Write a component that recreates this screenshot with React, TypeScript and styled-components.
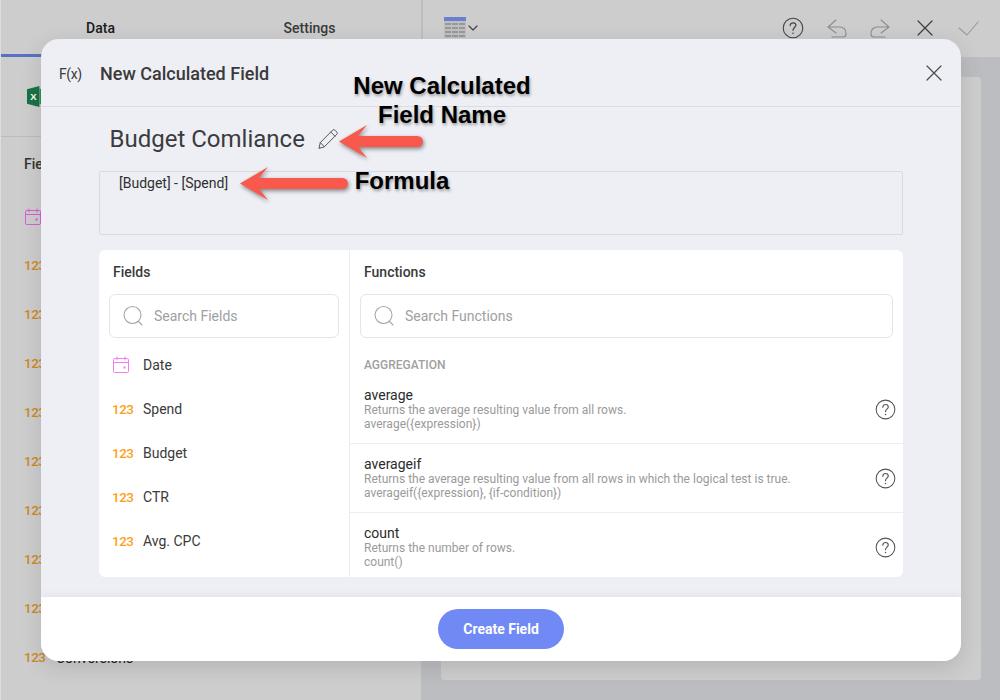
import React from "react";
import styled, { createGlobalStyle } from "styled-components";

const Global = createGlobalStyle`
  html, body { margin: 0; padding: 0; width: 1000px; height: 700px; overflow: hidden; background: #cdcdcd; }
  * { box-sizing: border-box; }
  body { font-family: Roboto, "Liberation Sans", sans-serif; }
`;

const Page = styled.div`
  position: relative;
  width: 1000px;
  height: 700px;
  display: flex;
  overflow: hidden;
  background: #cdcdcd;
`;
const LeftPanel = styled.aside`
  width: 421px;
  flex: none;
  display: flex;
  flex-direction: column;
  border-left: 1px solid #dedede;
  overflow: hidden;
`;
const Tabs = styled.div`
  height: 57px;
  flex: none;
  display: flex;
  margin-left: -5px;
`;
const Tab = styled.div<{ $active?: boolean }>`
  width: 209px;
  flex: none;
  display: flex;
  align-items: flex-start;
  justify-content: center;
  padding-top: 20px;
  font-size: 14px;
  line-height: 17px;
  font-weight: 500;
  color: ${(p) => (p.$active ? "#1a1a1a" : "#3a3a3a")};
  border-bottom: 3px solid ${(p) => (p.$active ? "#5b6fc4" : "transparent")};
`;
const Source = styled.div`
  height: 80px;
  flex: none;
  display: flex;
  align-items: center;
  gap: 8px;
  padding: 0 26px 0;
  border-bottom: 1px solid #bcbcbc;
  font-size: 14px;
  color: #222;
`;
const LeftHeading = styled.div`
  height: 55px;
  flex: none;
  padding: 19px 0 0 23px;
  font-size: 14px;
  line-height: 17px;
  font-weight: 500;
  color: #333;
`;
const LeftRow = styled.div`
  height: 49px;
  flex: none;
  display: flex;
  align-items: center;
  gap: 11px;
  padding-left: 23px;
  font-size: 14px;
  color: #222;
`;
const DimNum = styled.span`
  width: 21px;
  margin-bottom: 2px;
  font-size: 13.5px;
  letter-spacing: -0.5px;
  font-weight: 500;
  color: #cc8a22;
`;
const RightPanel = styled.main`
  flex: 1;
  display: flex;
  flex-direction: column;
  background: #bcbdc1;
`;
const Toolbar = styled.div`
  height: 57px;
  flex: none;
  display: flex;
  align-items: flex-start;
  background: #cdcdcd;
  padding: 17px 21px 0 0;
`;
const ToolDivider = styled.div`
  width: 2px;
  height: 40px;
  margin-top: -17px;
  background: #bebebe;
  margin-right: 21px;
`;
const ToolSpacer = styled.div`
  flex: 1;
`;
const ToolIcon = styled.span<{ $gap: number }>`
  width: 22px;
  height: 22px;
  margin-left: ${(p) => p.$gap}px;
  display: block;
  flex: none;
`;
const Canvas = styled.div`
  flex: 1;
  margin: 20px 19px 20px 20px;
  background: #cdcdcd;
  border-radius: 4px;
`;

const Modal = styled.section`
  position: absolute;
  left: 41px;
  top: 39px;
  width: 920px;
  height: 622px;
  display: flex;
  flex-direction: column;
  background: #eeeff4;
  border-radius: 18px;
  overflow: hidden;
  box-shadow: 0 6px 22px rgba(0, 0, 0, 0.12);
`;
const ModalHeader = styled.header`
  height: 68px;
  flex: none;
  display: flex;
  align-items: center;
  padding: 1px 16px 0 18px;
  border-bottom: 1px solid #dcdde2;
`;
const Fx = styled.span`
  width: 41px;
  padding-top: 2px;
  font-size: 14px;
  letter-spacing: -0.4px;
  color: #3a3a3a;
`;
const ModalTitle = styled.h1`
  flex: 1;
  margin: 0;
  padding-top: 2px;
  font-size: 18px;
  line-height: 22px;
  font-weight: 500;
  color: #3a3a3a;
`;
const ModalBody = styled.div`
  flex: 1;
  min-height: 0;
  display: flex;
  flex-direction: column;
  padding: 0 58px 20px;
`;
const NameRow = styled.div`
  height: 64px;
  flex: none;
  display: flex;
  align-items: center;
  gap: 12px;
  padding: 0 0 0 10.5px;
`;
const NameText = styled.div`
  font-size: 24px;
  line-height: 28px;
  color: #3b3b3f;
`;
const Formula = styled.div`
  height: 64px;
  flex: none;
  padding: 3px 19px;
  border: 1px solid #d9dae0;
  border-radius: 2px;
  font-size: 14px;
  line-height: 17px;
  color: #2f2f2f;
`;
const Panels = styled.div`
  flex: 1;
  min-height: 0;
  margin-top: 15px;
  display: flex;
  background: #fff;
  border-radius: 6px;
  overflow: hidden;
`;
const FieldsCol = styled.div`
  width: 251px;
  flex: none;
  padding: 0 10px;
  border-right: 1px solid #eceded;
  overflow: hidden;
`;
const FunctionsCol = styled.div`
  flex: 1;
  min-width: 0;
  overflow: hidden;
`;
const ColHeading = styled.div<{ $pad: number }>`
  height: 44px;
  padding: 14px 0 0 ${(p) => p.$pad}px;
  font-size: 14px;
  line-height: 17px;
  font-weight: 500;
  color: #3a3a3a;
`;
const SearchBox = styled.div<{ $margin?: string }>`
  height: 44px;
  margin: ${(p) => p.$margin ?? "0"};
  display: flex;
  align-items: center;
  gap: 11px;
  padding-left: 13px;
  border: 1px solid #e4e4e6;
  border-radius: 6px;
  font-size: 14px;
  color: #a0a0a0;
`;
const FieldList = styled.div`
  margin-top: 5px;
`;
const FieldRow = styled.div`
  height: 44px;
  display: flex;
  align-items: center;
  padding-left: 3px;
  font-size: 14px;
  color: #3a3a3a;
`;
const FieldGlyph = styled.span`
  width: 31px;
  flex: none;
  display: flex;
  align-items: center;
  font-size: 13.5px;
  letter-spacing: -0.5px;
  font-weight: 500;
  color: #ffa01c;
`;
const GroupLabel = styled.div`
  height: 32px;
  margin-top: 5px;
  padding: 15px 0 0 14px;
  font-size: 12px;
  line-height: 15px;
  font-weight: 500;
  color: #a0a0a0;
`;
const FnRow = styled.div`
  height: 69px;
  flex: none;
  display: flex;
  align-items: center;
  padding: 0 7.5px 0 14px;
  border-bottom: 1px solid #eeeeef;
`;
const FnText = styled.div`
  flex: 1;
  min-width: 0;
  padding-top: 1px;
`;
const FnName = styled.div`
  font-size: 14px;
  line-height: 14px;
  margin-bottom: 1px;
  color: #2b2b2b;
`;
const FnDesc = styled.div`
  font-size: 12px;
  line-height: 14px;
  color: #9a9a9a;
`;
const Footer = styled.footer`
  height: 64px;
  flex: none;
  display: flex;
  align-items: center;
  justify-content: center;
  background: #fff;
  box-shadow: 0 -2px 8px rgba(0, 0, 0, 0.05);
  position: relative;
`;
const CreateButton = styled.button`
  width: 126px;
  height: 40px;
  border: 0;
  border-radius: 20px;
  background: #7089f5;
  color: #fff;
  font-family: Roboto, sans-serif;
  font-size: 14px;
  font-weight: 700;
`;
const Annotation = styled.div<{ $x: number; $y: number; $w: number }>`
  position: absolute;
  left: ${(p) => p.$x}px;
  top: ${(p) => p.$y}px;
  width: ${(p) => p.$w}px;
  text-align: center;
  font-family: "Liberation Sans", Arial, sans-serif;
  font-size: 24px;
  line-height: 29px;
  font-weight: 700;
  color: #000;
  text-shadow: 1px 2px 3px rgba(0, 0, 0, 0.35);
`;
const ArrowLayer = styled.svg`
  position: absolute;
  left: 0;
  top: 0;
  width: 1000px;
  height: 700px;
  pointer-events: none;
  filter: drop-shadow(1px 2px 2px rgba(0, 0, 0, 0.45));
`;

const stroke = { fill: "none", stroke: "currentColor", strokeLinecap: "round", strokeLinejoin: "round" } as const;

const HelpIcon = ({ size = 22, color = "#444" }: { size?: number; color?: string }) => (
  <svg width={size} height={size} viewBox="0 0 22 22" style={{ color, flex: "none", display: "block" }}>
    <circle cx="11" cy="11" r="9.8" {...stroke} strokeWidth="1.1" />
    <path d="M8.2 8.6c0-1.7 1.3-2.8 2.9-2.8s2.8 1.1 2.8 2.5c0 2.3-2.9 2.3-2.9 5" {...stroke} strokeWidth="1.2" />
    <circle cx="11" cy="16.2" r="0.8" fill="currentColor" />
  </svg>
);
const CalendarIcon = ({ color }: { color: string }) => (
  <svg width="18" height="18" viewBox="0 0 18 18" style={{ color, display: "block" }}>
    <rect x="1.5" y="2.5" width="15" height="14" rx="1.2" {...stroke} strokeWidth="1" />
    <path d="M1.5 6.5h15M5 1v3M13 1v3" {...stroke} strokeWidth="1" />
    <rect x="11.5" y="10.5" width="2" height="2" fill="currentColor" />
  </svg>
);
const SearchIcon = () => (
  <svg width="20" height="22" viewBox="0 0 20 22" style={{ color: "#a6a6a6", flex: "none" }}>
    <circle cx="9.5" cy="10" r="8.5" {...stroke} strokeWidth="1.1" />
    <path d="M15.5 16.5l3.5 3.5" {...stroke} strokeWidth="1.1" />
  </svg>
);
const CloseIcon = ({ color }: { color: string }) => (
  <svg width="22" height="22" viewBox="0 0 22 22" style={{ color, display: "block", flex: "none" }}>
    <path d="M4 4l14 14M18 4L4 18" {...stroke} strokeWidth="1.2" />
  </svg>
);
const PencilIcon = () => (
  <svg width="22" height="22" viewBox="0 0 22 22" style={{ color: "#555", flex: "none" }}>
    <path d="M2 20l1.3-5.4L15.6 2.2a1.6 1.6 0 0 1 2.3 0l1.9 1.9a1.6 1.6 0 0 1 0 2.3L7.4 18.7z" {...stroke} strokeWidth="1" />
    <path d="M13.8 4l4.2 4.2M3.3 14.6l4.1 4.1" {...stroke} strokeWidth="1" />
  </svg>
);
const TableIcon = () => (
  <svg width="22" height="21" viewBox="0 0 22 21" style={{ display: "block", flex: "none" }}>
    <rect x="0" y="0" width="22" height="4" fill="#6b7fd0" />
    <rect x="0" y="4" width="22" height="17" fill="#c0c0c0" />
    <path d="M1 7h6M8 7h6M15 7h6M1 11h6M8 11h6M15 11h6M1 15h6M8 15h6M15 15h6M1 19h6M8 19h6M15 19h6" stroke="#8c8c8c" strokeWidth="1.4" />
  </svg>
);
const ExcelIcon = () => (
  <svg width="21" height="21" viewBox="0 0 22 22" style={{ flex: "none", display: "block" }}>
    <path d="M0 3.5L13 0v22L0 18.5z" fill="#1d7145" />
    <rect x="13" y="3" width="9" height="16" fill="#2f8f5b" />
    <text x="3.4" y="15" fontFamily="Liberation Sans" fontSize="10" fontWeight="700" fill="#fff">X</text>
  </svg>
);

const dimFields = ["Spend", "Budget", "CTR", "Avg. CPC", "Clicks", "Impressions", "CPM", "Revenue", "Conversions"];
const fields = ["Spend", "Budget", "CTR", "Avg. CPC"];
const functions = [
  { name: "average", desc: "Returns the average resulting value from all rows.", sig: "average({expression})" },
  { name: "averageif", desc: "Returns the average resulting value from all rows in which the logical test is true.", sig: "averageif({expression}, {if-condition})" },
  { name: "count", desc: "Returns the number of rows.", sig: "count()" },
];

export default function App() {
  return (
    <Page>
      <Global />
      <LeftPanel>
        <Tabs>
          <Tab $active>Data</Tab>
          <Tab>Settings</Tab>
        </Tabs>
        <Source>
          <ExcelIcon />
          <span>Marketing.xlsx</span>
        </Source>
        <LeftHeading>Fields</LeftHeading>
        <LeftRow>
          <CalendarIcon color="#d75fd6" />
          <span>Date</span>
        </LeftRow>
        {dimFields.map((f) => (
          <LeftRow key={f}>
            <DimNum>123</DimNum>
            <span>{f}</span>
          </LeftRow>
        ))}
      </LeftPanel>
      <RightPanel>
        <Toolbar>
          <ToolDivider />
          <TableIcon />
          <svg width="14" height="22" viewBox="0 0 14 22" style={{ color: "#444", flex: "none" }}>
            <path d="M3 9l4 4 4-4" {...stroke} strokeWidth="1.2" />
          </svg>
          <ToolSpacer />
          <ToolIcon $gap={0}><HelpIcon /></ToolIcon>
          <ToolIcon $gap={22}>
            <svg width="22" height="22" viewBox="0 0 22 22" style={{ color: "#8e8e8e", display: "block" }}>
              <path d="M10 3L2 10l8 6M2 10h12a6 6 0 0 1 6 6v1a3 3 0 0 1-3 3H6" {...stroke} strokeWidth="1.1" />
            </svg>
          </ToolIcon>
          <ToolIcon $gap={21}>
            <svg width="22" height="22" viewBox="0 0 22 22" style={{ color: "#8e8e8e", display: "block" }}>
              <path d="M12 3l8 7-8 6M20 10H8a6 6 0 0 0-6 6v1a3 3 0 0 0 3 3h11" {...stroke} strokeWidth="1.1" />
            </svg>
          </ToolIcon>
          <ToolIcon $gap={23}><CloseIcon color="#3d3d3d" /></ToolIcon>
          <ToolIcon $gap={21}>
            <svg width="22" height="22" viewBox="0 0 22 22" style={{ color: "#9a9a9a", display: "block" }}>
              <path d="M2 11l8 7L21 5" {...stroke} strokeWidth="1.1" />
            </svg>
          </ToolIcon>
        </Toolbar>
        <Canvas />
      </RightPanel>

      <Modal>
        <ModalHeader>
          <Fx>F(x)</Fx>
          <ModalTitle>New Calculated Field</ModalTitle>
          <CloseIcon color="#4a4a4a" />
        </ModalHeader>
        <ModalBody>
          <NameRow>
            <NameText>Budget Comliance</NameText>
            <PencilIcon />
          </NameRow>
          <Formula>[Budget] - [Spend]</Formula>
          <Panels>
            <FieldsCol>
              <ColHeading $pad={4}>Fields</ColHeading>
              <SearchBox>
                <SearchIcon />
                <span>Search Fields</span>
              </SearchBox>
              <FieldList>
                <FieldRow>
                  <FieldGlyph><CalendarIcon color="#f57cf0" /></FieldGlyph>
                  <span>Date</span>
                </FieldRow>
                {fields.map((f) => (
                  <FieldRow key={f}>
                    <FieldGlyph>123</FieldGlyph>
                    <span>{f}</span>
                  </FieldRow>
                ))}
              </FieldList>
            </FieldsCol>
            <FunctionsCol>
              <ColHeading $pad={14}>Functions</ColHeading>
              <SearchBox $margin="0 10px 0 10px">
                <SearchIcon />
                <span>Search Functions</span>
              </SearchBox>
              <GroupLabel>AGGREGATION</GroupLabel>
              {functions.map((fn) => (
                <FnRow key={fn.name}>
                  <FnText>
                    <FnName>{fn.name}</FnName>
                    <FnDesc>{fn.desc}</FnDesc>
                    <FnDesc>{fn.sig}</FnDesc>
                  </FnText>
                  <HelpIcon size={21} color="#555" />
                </FnRow>
              ))}
            </FunctionsCol>
          </Panels>
        </ModalBody>
        <Footer>
          <CreateButton>Create Field</CreateButton>
        </Footer>
      </Modal>

      <ArrowLayer viewBox="0 0 1000 700">
        <path d="M339 141.5L367 125L358 136H417.5a5.5 5.5 0 0 1 0 11H358L367 158Z" fill="#f9594c" />
        <path d="M240 183.5L268 167L259 178H342.5a5.5 5.5 0 0 1 0 11H259L268 200Z" fill="#f9594c" />
      </ArrowLayer>
      <Annotation $x={332} $y={71} $w={220}>
        New Calculated
        <br />
        Field Name
      </Annotation>
      <Annotation $x={336} $y={166} $w={132}>Formula</Annotation>
    </Page>
  );
}
